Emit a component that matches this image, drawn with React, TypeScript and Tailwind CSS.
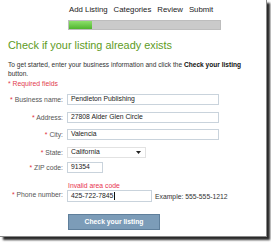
const font = { fontFamily: '"Liberation Sans", Arial, sans-serif' };

const Star = () => <span className="text-[#e0303a]">* </span>;

const Field = ({ label, value, width }: { label: string; value: string; width: string }) => (
  <div className="flex items-center">
    <div className="w-[63px] text-right text-[6.8px] leading-[8px] text-[#555]">
      <Star />
      {label}
    </div>
    <div
      className={`ml-[4px] flex h-[11px] items-center border border-[#c9d3dc] bg-white pl-[3px] text-[6.8px] text-[#222] ${width}`}
    >
      {value}
    </div>
  </div>
);

export default function App() {
  return (
    <div className="h-[243px] w-[271px] bg-white" style={font}>
      <div className="h-[237px] w-[267px] border-r border-b border-[#8a8a8a] bg-white shadow-[3px_3px_2px_#2a2a2a]">
        {/* steps */}
        <div className="flex gap-[6px] pt-[5px] pl-[69px] text-[7.8px] leading-[10px] text-[#222]">
          <span>Add Listing</span>
          <span>Categories</span>
          <span>Review</span>
          <span>Submit</span>
        </div>
        <div className="mt-[5px] ml-[68px] flex h-[10px] w-[153px] border border-[#bdbdbd] bg-[#cacaca]">
          <div className="h-full w-[23px] bg-gradient-to-b from-[#8de06a] to-[#4fb52c]" />
        </div>

        <h1 className="mt-[9px] ml-[8px] text-[10.9px] leading-[12px] text-[#5e9b1e]">
          Check if your listing already exists
        </h1>
        <p className="mt-[10px] px-[8px] text-[6.6px] leading-[8.5px] text-[#333]">
          To get started, enter your business information and click the{" "}
          <b className="text-[#111]">Check your listing</b> button.
        </p>
        <div className="mt-[2px] ml-[8px] text-[6.8px] leading-[8px] text-[#e23b4e]">* Required fields</div>

        <div className="mt-[6px] flex flex-col">
          <Field label="Business name:" value="Pendleton Publishing" width="w-[152px]" />
          <div className="mt-[7px]">
            <Field label="Address:" value="27808 Alder Glen Circle" width="w-[152px]" />
          </div>
          <div className="mt-[6px]">
            <Field label="City:" value="Valencia" width="w-[152px]" />
          </div>
          <div className="mt-[7px] flex items-center">
            <div className="w-[63px] text-right text-[6.8px] leading-[8px] text-[#555]">
              <Star />
              State:
            </div>
            <div className="ml-[4px] flex h-[11px] w-[79px] items-center justify-between border border-[#e2e2e2] bg-white pr-[4px] pl-[3px] text-[6.8px] text-[#222]">
              <span>California</span>
              <svg width="5" height="3" viewBox="0 0 5 3">
                <path d="M0 0h5L2.5 3z" fill="#222" />
              </svg>
            </div>
          </div>
          <div className="mt-[4px]">
            <Field label="ZIP code:" value="91354" width="w-[36px]" />
          </div>

          <div className="mt-[9px] ml-[68px] text-[6.8px] leading-[8px] text-[#e8334f]">Invalid area code</div>
          <div className="flex items-start">
            <div className="w-[63px] pt-[1px] text-right text-[6.8px] leading-[8px] text-[#555]">
              <Star />
              Phone number:
            </div>
            <div className="ml-[4px] flex h-[12px] w-[85px] items-center border border-[#c9d3dc] bg-white pl-[3px] text-[6.8px] text-[#222]">
              425-722-7845
              <span className="ml-[0.5px] h-[8px] w-px bg-[#111]" />
            </div>
            <div className="ml-[3px] pt-[3px] text-[6.8px] leading-[8px] text-[#333]">Example: 555-555-1212</div>
          </div>

          <div className="mt-[12px] ml-[68px] flex h-[16px] w-[92px] items-center justify-center border border-[#5f7f9b] bg-[#7c9cb8] text-[6.8px] font-bold text-white">
            Check your listing
          </div>
        </div>
      </div>
    </div>
  );
}
